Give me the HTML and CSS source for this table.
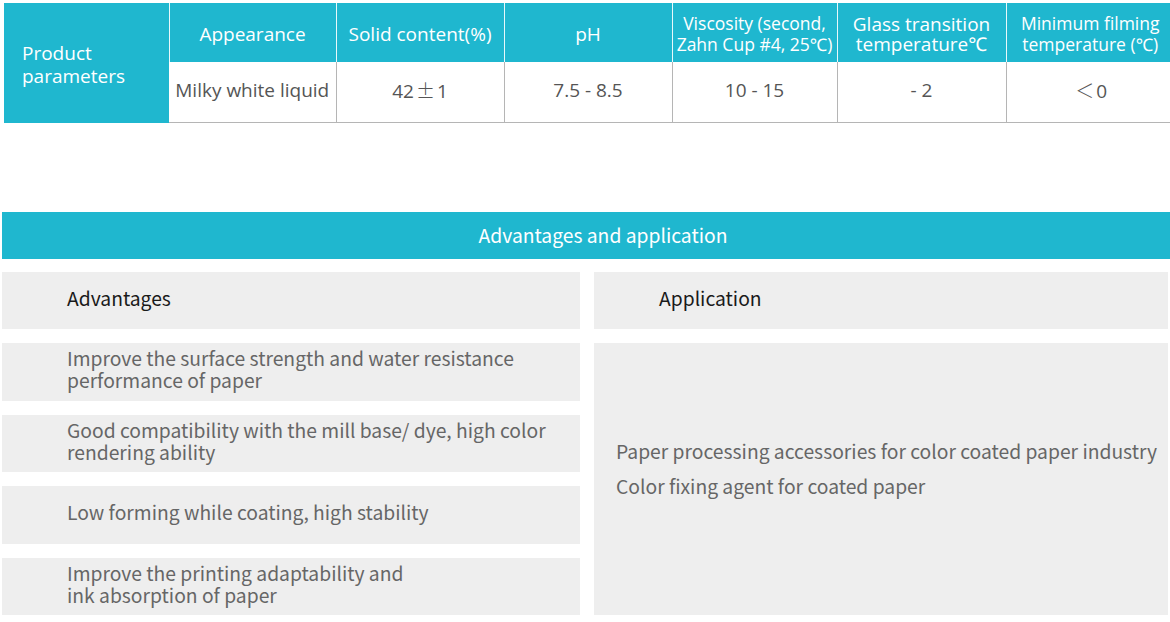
FILE: index.html
```html
<!DOCTYPE html>
<html>
<head>
<meta charset="utf-8">
<link rel="stylesheet" href="styles.css">
</head>
<body>
<div class="page">
  <table class="params">
    <tr class="head">
      <td class="label" rowspan="2">Product<br>parameters</td>
      <td>Appearance</td>
      <td>Solid content(%)</td>
      <td>pH</td>
      <td class="small">Viscosity (second,<br>Zahn Cup #4, 25℃)</td>
      <td class="tight">Glass transition<br>temperature℃</td>
      <td class="small">Minimum filming<br>temperature (℃)</td>
    </tr>
    <tr class="body">
      <td>Milky white liquid</td>
      <td>42<span class="cjk">±</span>1</td>
      <td>7.5 - 8.5</td>
      <td>10 - 15</td>
      <td>- 2</td>
      <td><span class="cjk">＜</span>0</td>
    </tr>
  </table>

  <section class="adv">
    <div class="bar">Advantages and application</div>
    <div class="grid">
      <div class="cell title">Advantages</div>
      <div class="cell title app-title">Application</div>
      <div class="cell item">Improve the surface strength and water resistance<br>performance of paper</div>
      <div class="cell app">
        <p>Paper processing accessories for color coated paper industry</p>
        <p>Color fixing agent for coated paper</p>
      </div>
      <div class="cell item">Good compatibility with the mill base/ dye, high color<br>rendering ability</div>
      <div class="cell item">Low forming while coating, high stability</div>
      <div class="cell item">Improve the printing adaptability and<br>ink absorption of paper</div>
    </div>
  </section>
</div>
</body>
</html>
```

FILE: styles.css
```css
* { box-sizing: border-box; }
html, body { margin: 0; padding: 0; background: #fff; }
body {
  font-family: "Noto Sans CJK SC", "Noto Sans", sans-serif;
  width: 1170px;
  height: 622px;
  overflow: hidden;
}
.page { padding: 3px 0 0 0; }

.params {
  margin-left: 4px;
  border-collapse: collapse;
  table-layout: fixed;
  width: 1170px;
  font-family: "Open Sans", "Noto Sans", sans-serif;
}
.params td {
  text-align: center;
  vertical-align: middle;
  padding: 0;
  white-space: nowrap;
}
.params tr.head td {
  background: #1fb7cf;
  color: #fff;
  height: 59px;
  font-size: 19px;
  border-left: 1px solid #e8f8fb;
  line-height: 21px;
  padding-top: 3px;
}
.params tr.head td.small { font-size: 17.5px; line-height: 21px; }
.params tr.head td.tight { font-size: 19px; line-height: 20px; }
.params td.label {
  text-align: left;
  padding-left: 18px;
  padding-top: 6px !important;
  width: 165px;
  border-left: none !important;
  border-bottom: 1px solid #1fb7cf;
  line-height: 23px !important;
}
.params tr.head td:nth-child(2) { width: 167px; }
.params tr.head td:nth-child(3) { width: 168px; }
.params tr.head td:nth-child(4) { width: 168px; }
.params tr.head td:nth-child(5) { width: 165px; }
.params tr.head td:nth-child(6) { width: 169px; }
.params tr.body td {
  height: 60px;
  color: #555;
  font-size: 19px;
  padding-bottom: 4px;
  border-left: 1px solid #b5b5b5;
  border-bottom: 1px solid #b5b5b5;
}
.params tr.body td:first-child { border-left: none; }
.cjk {
  font-family: "Noto Sans CJK SC", sans-serif;
  font-weight: 300;
  margin: 0 2px;
}

.adv { margin-top: 89px; padding-left: 2px; }
.bar {
  background: #1fb7cf;
  color: #fff;
  height: 47px;
  line-height: 47px;
  text-align: center;
  font-size: 19.3px;
  padding-left: 34px;
  padding-bottom: 2px;
}
.grid {
  margin-top: 13px;
  display: grid;
  grid-template-columns: 578px 574px;
  column-gap: 14px;
  row-gap: 14px;
  grid-auto-rows: 57.5px;
}
.cell {
  background: #eeeeee;
  display: flex;
  align-items: center;
  padding-left: 65px;
  padding-bottom: 5px;
  font-size: 19.3px;
}
.title { color: #1a1a1a; }
.app-title { padding-left: 65px; }
.item {
  color: #666;
  line-height: 22px;
}
.app {
  grid-column: 2;
  grid-row: 2 / span 4;
  flex-direction: column;
  align-items: flex-start;
  justify-content: center;
  padding-left: 22px;
  padding-bottom: 20px;
  color: #666;
}
.app p { margin: 0; line-height: 35px; white-space: nowrap; }
```
